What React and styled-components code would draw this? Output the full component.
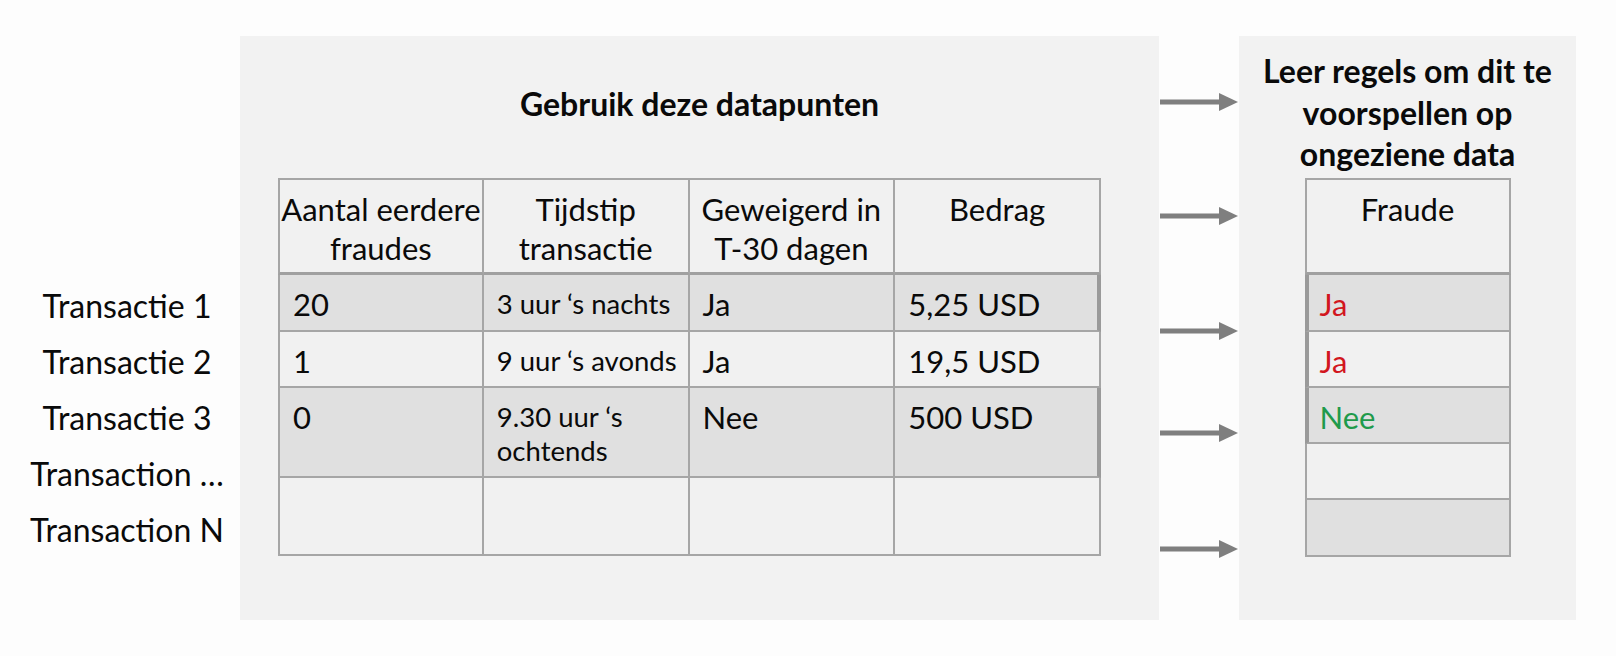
import React from 'react';
import styled, { createGlobalStyle } from 'styled-components';

const GlobalStyle = createGlobalStyle`
  html, body { margin: 0; padding: 0; background: #fdfdfd; }
  body { font-family: Lato, "Open Sans", "DejaVu Sans", sans-serif; color: #111; }
  * { box-sizing: border-box; }
`;

const Page = styled.div`
  width: 1616px;
  height: 656px;
  padding-top: 36px;
  display: flex;
  align-items: flex-start;
`;

const LabelColumn = styled.div`
  width: 240px;
  padding: 242px 0 0 14px;
  display: flex;
  flex-direction: column;
`;

const RowLabel = styled.div`
  height: 56px;
  line-height: 56px;
  font-size: 32px;
  text-align: center;
  white-space: nowrap;
  color: #0a0a0a;
`;

const Panel = styled.section`
  width: ${(p) => p.$width}px;
  height: 584px;
  background: #f2f2f2;
  display: flex;
  flex-direction: column;
  align-items: center;
`;

const PanelTitle = styled.h2`
  margin: ${(p) => p.$margin};
  font-size: ${(p) => p.$size}px;
  line-height: ${(p) => p.$lineHeight}px;
  font-weight: 700;
  text-align: center;
  white-space: nowrap;
  color: #0a0a0a;
`;

const Grid = styled.div`
  display: grid;
  grid-template-columns: repeat(${(p) => p.$cols}, minmax(0, 1fr));
  grid-template-rows: ${(p) => p.$rows};
  width: ${(p) => p.$width}px;
  border-top: 2px solid #a6a6a6;
  align-self: ${(p) => (p.$offset ? 'flex-start' : 'center')};
  margin-left: ${(p) => p.$offset || 0}px;
`;

const Cell = styled.div`
  min-width: 0;
  background: ${(p) => (p.$shade === 'dark' ? '#e0e0e0' : '#f1f1f1')};
  border-right: ${(p) => (p.$edge === 'right' ? '4px solid #9a9a9a' : '2px solid #a6a6a6')};
  border-left: ${(p) =>
    p.$edge === 'left' ? '4px solid #9a9a9a' : p.$first ? '2px solid #a6a6a6' : 'none'};
  border-bottom: ${(p) => (p.$head ? '3px solid #a0a0a0' : '2px solid #a6a6a6')};
  padding: ${(p) =>
    p.$head ? '10px 0 0' : `${p.$small ? 12 : 11}px 0 0 ${p.$edge === 'left' ? 11 : 13}px`};
  text-align: ${(p) => (p.$head ? 'center' : 'left')};
  font-size: ${(p) => (p.$head ? 31 : p.$small ? 27.5 : 31)}px;
  line-height: ${(p) => (p.$head ? 39 : p.$small ? 34 : 36)}px;
  white-space: nowrap;
  color: ${(p) => (p.$tone === 'yes' ? '#d2161e' : p.$tone === 'no' ? '#1f9a4b' : '#0a0a0a')};
  overflow: visible;
`;

const ArrowColumn = styled.div`
  width: 80px;
  display: flex;
  flex-direction: column;
`;

const ArrowWrap = styled.div`
  height: 18px;
  margin-top: ${(p) => p.$gap}px;
  display: flex;
`;

const Arrow = ({ gap }) => (
  <ArrowWrap $gap={gap}>
    <svg width="80" height="18" viewBox="0 0 80 18">
      <rect x="1" y="6.5" width="61" height="5" fill="#7f7f7f" />
      <polygon points="60,0 79,9 60,18" fill="#7f7f7f" />
    </svg>
  </ArrowWrap>
);

const Lines = ({ lines }) =>
  lines.map((l, i) => (
    <React.Fragment key={i}>
      {i > 0 && <br />}
      {l}
    </React.Fragment>
  ));

const labels = ['Transactie 1', 'Transactie 2', 'Transactie 3', 'Transaction …', 'Transaction N'];

const headers = [['Aantal eerdere', 'fraudes'], ['Tijdstip', 'transactie'], ['Geweigerd in', 'T-30 dagen'], ['Bedrag']];

const rows = [
  { shade: 'dark', edge: true, cells: [['20'], ['3 uur ‘s nachts'], ['Ja'], ['5,25 USD']] },
  { shade: 'light', edge: false, cells: [['1'], ['9 uur ‘s avonds'], ['Ja'], ['19,5 USD']] },
  { shade: 'dark', edge: true, cells: [['0'], ['9.30 uur ‘s', 'ochtends'], ['Nee'], ['500 USD']] },
  { shade: 'light', edge: false, cells: [[], [], [], []] },
];

const fraud = [
  { shade: 'dark', edge: true, value: 'Ja', tone: 'yes' },
  { shade: 'light', edge: true, value: 'Ja', tone: 'yes' },
  { shade: 'dark', edge: true, value: 'Nee', tone: 'no' },
  { shade: 'light', edge: false, value: '', tone: '' },
  { shade: 'dark', edge: false, value: '', tone: '' },
];

const arrowTops = [57, 171, 286, 388, 504];

export default function App() {
  return (
    <>
      <GlobalStyle />
      <Page>
        <LabelColumn>
          {labels.map((l) => (
            <RowLabel key={l}>{l}</RowLabel>
          ))}
        </LabelColumn>

        <Panel $width={919}>
          <PanelTitle $margin="48px 0 55px" $size={32} $lineHeight={39}>
            Gebruik deze datapunten
          </PanelTitle>
          <Grid $cols={4} $rows="95px 57px 56px 90px 78px" $width={823} $offset={38}>
            {headers.map((h, i) => (
              <Cell key={i} $head $shade="light" $first={i === 0}>
                <Lines lines={h} />
              </Cell>
            ))}
            {rows.map((r, ri) =>
              r.cells.map((c, ci) => (
                <Cell
                  key={`${ri}-${ci}`}
                  $shade={r.shade}
                  $first={ci === 0}
                  $small={ci === 1}
                  $edge={r.edge && ci === 3 ? 'right' : undefined}
                >
                  <Lines lines={c} />
                </Cell>
              ))
            )}
          </Grid>
        </Panel>

        <ArrowColumn>
          {arrowTops.map((t, i) => (
            <Arrow key={i} gap={i === 0 ? t : t - arrowTops[i - 1] - 18} />
          ))}
        </ArrowColumn>

        <Panel $width={337}>
          <PanelTitle $margin="14px 0 3px" $size={32} $lineHeight={41.5}>
            <Lines lines={['Leer regels om dit te', 'voorspellen op', 'ongeziene data']} />
          </PanelTitle>
          <Grid $cols={1} $rows="95px 57px 56px 56px 56px 57px" $width={206}>
            <Cell $head $shade="light" $first>
              Fraude
            </Cell>
            {fraud.map((f, i) => (
              <Cell key={i} $shade={f.shade} $first $edge={f.edge ? 'left' : undefined} $tone={f.tone}>
                {f.value}
              </Cell>
            ))}
          </Grid>
        </Panel>
      </Page>
    </>
  );
}
